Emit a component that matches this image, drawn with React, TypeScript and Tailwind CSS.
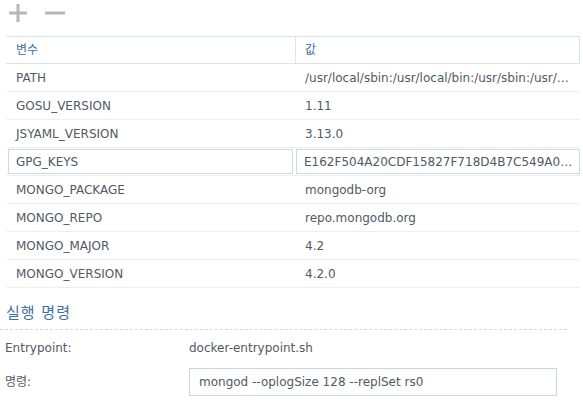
const ROWS = [
  ['PATH', '/usr/local/sbin:/usr/local/bin:/usr/sbin:/usr/bin:/sbin:/bin'],
  ['GOSU_VERSION', '1.11'],
  ['JSYAML_VERSION', '3.13.0'],
  ['GPG_KEYS', 'E162F504A20CDF15827F718D4B7C549A058F8B6B'],
  ['MONGO_PACKAGE', 'mongodb-org'],
  ['MONGO_REPO', 'repo.mongodb.org'],
  ['MONGO_MAJOR', '4.2'],
  ['MONGO_VERSION', '4.2.0'],
] as const

const SELECTED = 'GPG_KEYS'

function AddIcon() {
  return (
    <svg width="20" height="20" viewBox="0 0 20 20" aria-hidden>
      <path d="M10 1v18M1 10h18" stroke="currentColor" strokeWidth="3" />
    </svg>
  )
}

function RemoveIcon() {
  return (
    <svg width="20" height="20" viewBox="0 0 20 20" aria-hidden>
      <path d="M0 10h20" stroke="currentColor" strokeWidth="3" />
    </svg>
  )
}

export default function App() {
  return (
    <div className="h-[402px] w-[583px] overflow-hidden bg-white font-['DejaVu_Sans','Noto_Sans_CJK_KR',sans-serif] text-[12px] text-[#505a64]">
      <div className="flex h-[26px] items-center gap-[17px] pl-[8px] text-[#b4b8bd]">
        <AddIcon />
        <RemoveIcon />
      </div>

      <div className="mt-[10px] ml-[6px] w-[574px]">
        <div className="flex h-[28px] items-center border-y border-[#d9e4ef] text-[#3d6fa5]">
          <div className="w-[290px] border-r border-[#d9e4ef] pl-[10px] leading-[26px]">변수</div>
          <div className="flex-1 border-r border-[#d9e4ef] pl-[9px] leading-[26px]">값</div>
        </div>
        {ROWS.map(([k, v]) => {
          const sel = k === SELECTED
          return (
            <div key={k} className="flex h-[28px] border-b border-[#eceef0]">
              <div
                className={
                  sel
                    ? 'my-[1px] ml-[2px] mr-[3px] flex w-[285px] items-center border border-[#c9d9ea] pl-[7px]'
                    : 'flex w-[290px] items-center pl-[10px]'
                }
              >
                {k}
              </div>
              <div
                className={
                  sel
                    ? 'my-[1px] flex min-w-0 flex-1 items-center border border-[#c9d9ea] pl-[7px] pr-[4px]'
                    : 'flex min-w-0 flex-1 items-center pl-[9px] pr-[4px]'
                }
              >
                <span className="truncate">{v}</span>
              </div>
            </div>
          )
        })}
      </div>

      <div className="mt-[14px] w-[567px] border-b border-dashed border-[#cfdbe8] pb-[4px] pl-[6px] text-[15px] tracking-[1px] text-[#3d6fa5]">
        실행 명령
      </div>

      <div className="mt-[9px] flex items-center pl-[5px]">
        <div className="w-[184px]">Entrypoint:</div>
        <div>docker-entrypoint.sh</div>
      </div>
      <div className="mt-[11px] flex items-center pl-[5px]">
        <div className="w-[184px]">명령:</div>
        <div className="flex h-[28px] w-[368px] items-center border border-[#cdd3d9] pl-[9px]">
          mongod --oplogSize 128 --replSet rs0
        </div>
      </div>
    </div>
  )
}
